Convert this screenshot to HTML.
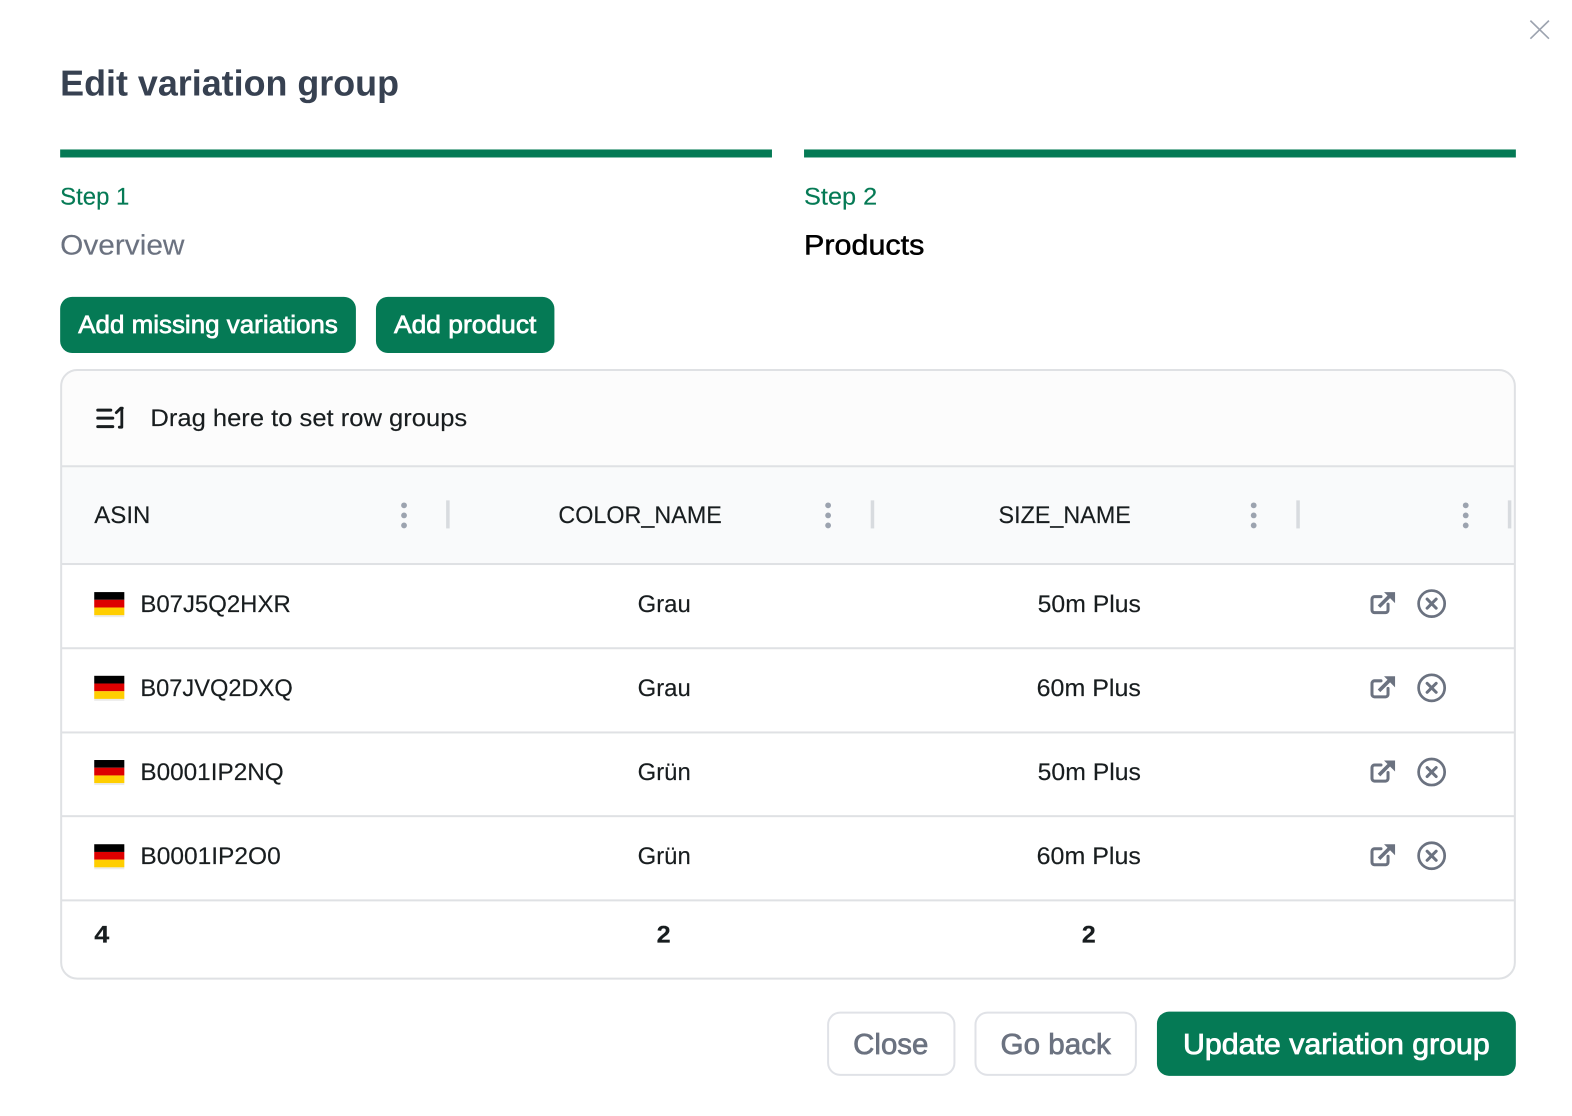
<!DOCTYPE html>
<html lang="en">
<head>
<meta charset="utf-8">
<title>Edit variation group</title>
<style>
html,body{margin:0;padding:0;background:#fff;width:1572px;height:1116px;overflow:hidden}
svg{display:block}
text{font-family:"Liberation Sans",sans-serif;text-rendering:geometricPrecision}
.t{font-size:24px;fill:#181d1f;stroke:#181d1f;stroke-width:.15px}
.b{font-weight:700}
</style>
</head>
<body>
<svg xmlns="http://www.w3.org/2000/svg" width="1572" height="1116" viewBox="0 0 1568 1113">
<defs>
<g id="flag">
<rect x="0" y="2" width="30" height="23" fill="#000" opacity=".08"/>
<rect x="0" y="0" width="30" height="7.7" fill="#000"/>
<rect x="0" y="7.7" width="30" height="7.7" fill="#d00"/>
<rect x="0" y="15.4" width="30" height="7.6" fill="#ffce00"/>
</g>
<g id="acts" fill="none" stroke="#6b7280" stroke-width="3">
<path d="M1377.500 595h-6.500a2.500 2.500 0 0 0-2.500 2.500v11a2.500 2.500 0 0 0 2.500 2.500h11a2.500 2.500 0 0 0 2.500-2.500v-6" stroke-linecap="round"/>
<path d="M1375.500 605L1386 594.500" stroke-width="3.600"/>
<path d="M1380.500 590.500h11v11z" fill="#6b7280" stroke="none"/>
<circle cx="1428" cy="602" r="13" stroke-width="2.700"/>
<path d="M1423.500 597.500l9 9M1432.500 597.500l-9 9" stroke-linecap="round"/>
</g>
<g id="dots" fill="#9ca3af"><circle cx="0" cy="504" r="2.900"/><circle cx="0" cy="514" r="2.900"/><circle cx="0" cy="524" r="2.900"/></g>
</defs>

<rect x="0" y="0" width="1568" height="1113" fill="#fff"/>

<path d="M1526.500 20.500L1545 38.500M1545 20.500L1526.500 38.500" stroke="#9ca3af" stroke-width="1.600" fill="none"/>

<text x="60" y="95" font-size="36" class="b" fill="#374151" textLength="338" lengthAdjust="spacingAndGlyphs">Edit variation group</text>

<rect x="60" y="149" width="710" height="8" fill="#057a55"/>
<rect x="802" y="149" width="710" height="8" fill="#057a55"/>
<text x="60" y="204" font-size="24" fill="#057a55" stroke="#057a55" stroke-width=".15" textLength="69" lengthAdjust="spacingAndGlyphs">Step 1</text>
<text x="802" y="204" font-size="24" fill="#057a55" stroke="#057a55" stroke-width=".15" textLength="73" lengthAdjust="spacingAndGlyphs">Step 2</text>
<text x="60" y="254" font-size="28" fill="#6b7280" stroke="#6b7280" stroke-width=".15" textLength="124" lengthAdjust="spacingAndGlyphs">Overview</text>
<text x="802" y="254" font-size="28" fill="#000" stroke="#000" stroke-width=".5" textLength="120" lengthAdjust="spacingAndGlyphs">Products</text>

<rect x="60" y="296" width="295" height="56" rx="12" fill="#057a55"/>
<rect x="375" y="296" width="178" height="56" rx="12" fill="#057a55"/>
<text x="78" y="332" font-size="25" fill="#fff" stroke="#fff" stroke-width=".7" textLength="259" lengthAdjust="spacingAndGlyphs">Add missing variations</text>
<text x="393" y="332" font-size="25" fill="#fff" stroke="#fff" stroke-width=".7" textLength="142" lengthAdjust="spacingAndGlyphs">Add product</text>

<clipPath id="c"><rect x="61" y="369" width="1450" height="607" rx="16"/></clipPath>
<g clip-path="url(#c)">
<rect x="61" y="369" width="1450" height="96" fill="#fcfcfc"/>
<rect x="61" y="465" width="1450" height="98" fill="#f9fafb"/>
<rect x="61" y="464" width="1450" height="2" fill="#dfe1e4"/>
<rect x="61" y="561.500" width="1450" height="2" fill="#dfe1e4"/>
<rect x="61" y="645.500" width="1450" height="2" fill="#dfe1e4"/>
<rect x="61" y="729.500" width="1450" height="2" fill="#dfe1e4"/>
<rect x="61" y="813" width="1450" height="2" fill="#dfe1e4"/>
<rect x="61" y="897" width="1450" height="2" fill="#dfe1e4"/>
</g>
<rect x="61" y="369" width="1450" height="607" rx="16" fill="none" stroke="#dfe1e4" stroke-width="2"/>

<g fill="none" stroke="#181d1f" stroke-width="3" stroke-linecap="round" stroke-linejoin="round">
<path d="M97.500 409h13M97.500 417h15M97.500 425.500h15"/>
<path d="M119 426h2.500V408.500" stroke-width="2.800"/>
<path d="M116 411.500l4.500-4.500 1.500 0" stroke-width="2.800"/>
</g>
<text x="150" y="425" class="t" textLength="316" lengthAdjust="spacingAndGlyphs">Drag here to set row groups</text>

<text x="94" y="521.500" class="t" textLength="56" lengthAdjust="spacingAndGlyphs">ASIN</text>
<text x="557" y="521.500" class="t" textLength="163" lengthAdjust="spacingAndGlyphs">COLOR_NAME</text>
<text x="996" y="521.500" class="t" textLength="132" lengthAdjust="spacingAndGlyphs">SIZE_NAME</text>
<use href="#dots" x="403"/><use href="#dots" x="826"/><use href="#dots" x="1250.500"/><use href="#dots" x="1462"/>
<g fill="#d8dbdf">
<rect x="445" y="499" width="3.500" height="28"/>
<rect x="868.500" y="499" width="3.500" height="28"/>
<rect x="1293" y="499" width="3.500" height="28"/>
<rect x="1504" y="499" width="3.500" height="28"/>
</g>

<use href="#flag" x="94" y="590.500"/>
<use href="#flag" x="94" y="674"/>
<use href="#flag" x="94" y="758"/>
<use href="#flag" x="94" y="842"/>

<text x="140" y="610.500" class="t" textLength="150" lengthAdjust="spacingAndGlyphs">B07J5Q2HXR</text>
<text x="636" y="610.500" class="t" textLength="53" lengthAdjust="spacingAndGlyphs">Grau</text>
<text x="1035" y="610.500" class="t" textLength="103" lengthAdjust="spacingAndGlyphs">50m Plus</text>
<use href="#acts"/>

<text x="140" y="694" class="t" textLength="152" lengthAdjust="spacingAndGlyphs">B07JVQ2DXQ</text>
<text x="636" y="694" class="t" textLength="53" lengthAdjust="spacingAndGlyphs">Grau</text>
<text x="1034" y="694" class="t" textLength="104" lengthAdjust="spacingAndGlyphs">60m Plus</text>
<use href="#acts" y="84"/>

<text x="140" y="778" class="t" textLength="143" lengthAdjust="spacingAndGlyphs">B0001IP2NQ</text>
<text x="636" y="778" class="t" textLength="53" lengthAdjust="spacingAndGlyphs">Grün</text>
<text x="1035" y="778" class="t" textLength="103" lengthAdjust="spacingAndGlyphs">50m Plus</text>
<use href="#acts" y="168"/>

<text x="140" y="861.500" class="t" textLength="140" lengthAdjust="spacingAndGlyphs">B0001IP2O0</text>
<text x="636" y="861.500" class="t" textLength="53" lengthAdjust="spacingAndGlyphs">Grün</text>
<text x="1034" y="861.500" class="t" textLength="104" lengthAdjust="spacingAndGlyphs">60m Plus</text>
<use href="#acts" y="251.500"/>

<text x="94" y="940" class="t b" textLength="15" lengthAdjust="spacingAndGlyphs">4</text>
<text x="655" y="940" class="t b" textLength="14" lengthAdjust="spacingAndGlyphs">2</text>
<text x="1079" y="940" class="t b" textLength="14" lengthAdjust="spacingAndGlyphs">2</text>

<rect x="826" y="1010" width="126" height="62" rx="12" fill="#fff" stroke="#e0e2e7" stroke-width="2"/>
<rect x="973" y="1010" width="160" height="62" rx="12" fill="#fff" stroke="#e0e2e7" stroke-width="2"/>
<rect x="1154" y="1009" width="358" height="64" rx="12" fill="#057a55"/>
<text x="851" y="1051" font-size="29" fill="#6b7280" stroke="#6b7280" stroke-width=".7" textLength="75" lengthAdjust="spacingAndGlyphs">Close</text>
<text x="998" y="1051" font-size="29" fill="#6b7280" stroke="#6b7280" stroke-width=".7" textLength="110" lengthAdjust="spacingAndGlyphs">Go back</text>
<text x="1180" y="1051" font-size="29" fill="#fff" stroke="#fff" stroke-width=".8" textLength="306" lengthAdjust="spacingAndGlyphs">Update variation group</text>
</svg>
</body>
</html>
